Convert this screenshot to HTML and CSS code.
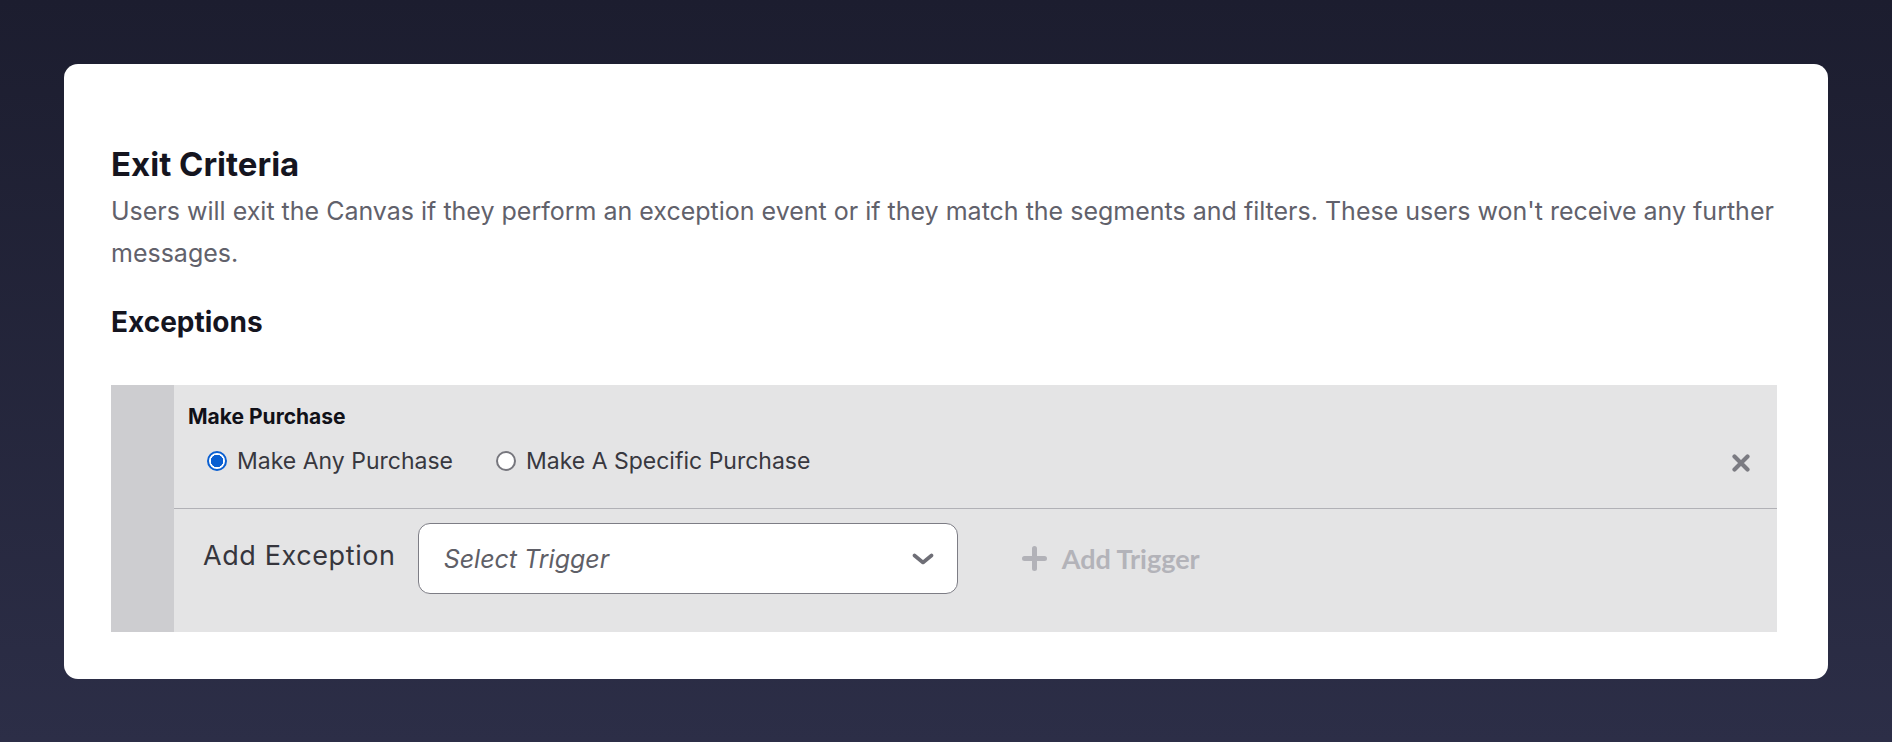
FILE: index.html
```html
<!DOCTYPE html>
<html lang="en">
<head>
  <meta charset="UTF-8" />
  <meta name="viewport" content="width=device-width, initial-scale=1.0" />
  <title>Exit Criteria</title>
  <link rel="stylesheet" href="styles.css">
</head>
<body>
  <div class="card">
    <h1>Exit Criteria</h1>
    <p class="desc">Users will exit the Canvas if they perform an exception event or if they match the segments and filters. These users won't receive any further messages.</p>
    <h2>Exceptions</h2>

    <div class="exceptions">
      <div class="stripe"></div>
      <div class="exceptions-body">
        <div class="event">
          <div class="event-name">Make Purchase</div>
          <div class="radios">
            <label class="radio"><span class="dot checked"></span>Make Any Purchase</label>
            <label class="radio"><span class="dot"></span>Make A Specific Purchase</label>
            <button type="button" class="remove" title="Remove">
              <svg width="18" height="18" viewBox="0 0 18 18"><path d="M2.5 2.5 L15.5 15.5 M15.5 2.5 L2.5 15.5" stroke="#7b7b82" stroke-width="4.2" stroke-linecap="round" fill="none"/></svg>
            </button>
          </div>
        </div>

        <div class="add-row">
          <span class="add-label">Add Exception</span>
          <div class="select">
            <span>Select Trigger</span>
            <svg width="22" height="12" viewBox="0 0 22 12"><path d="M2.5 2.5 L11 9.5 L19.5 2.5" stroke="#6e6e76" stroke-width="3.6" stroke-linecap="round" stroke-linejoin="round" fill="none"/></svg>
          </div>
          <button type="button" class="add-trigger">
            <svg width="25" height="25" viewBox="0 0 25 25"><path d="M12.5 2.5 V22.5 M2.5 12.5 H22.5" stroke="#b2b2b8" stroke-width="5" stroke-linecap="round" fill="none"/></svg>
            Add Trigger
          </button>
        </div>
      </div>
    </div>
  </div>
</body>
</html>
```

FILE: styles.css
```css
html, body {
  height: 100%;
}
body {
  margin: 0;
  padding: 64px;
  box-sizing: border-box;
  font-family: Inter, "Noto Sans", sans-serif;
  background: linear-gradient(to bottom, #1c1d2f, #2c2e47);
}
.card {
  background: white;
  border-radius: 14px;
  padding: 80px 51px 47px 47px;
}
h1 {
  margin: 0;
  font-size: 33px;
  line-height: 40px;
  font-weight: 700;
  color: #15151f;
}
.desc {
  margin: 6px 0 0;
  font-size: 25px;
  line-height: 42px;
  color: #61616b;
}
h2 {
  margin: 31px 0 0;
  font-size: 28px;
  line-height: 34px;
  font-weight: 700;
  color: #15151f;
}
.exceptions {
  display: flex;
  margin-top: 46px;
  background: #e4e4e5;
}
.stripe {
  width: 63px;
  background: #cdcdd0;
}
.exceptions-body {
  flex: 1;
}
.event {
  padding: 20px 0 34px 14px;
  border-bottom: 1px solid #b1b1b6;
}
.event-name {
  font-size: 21px;
  line-height: 24px;
  font-weight: 700;
  color: #111118;
}
.radios {
  display: flex;
  align-items: center;
  gap: 43px;
  margin-top: 19px;
  padding: 0 27px 0 19px;
}
.radio {
  display: flex;
  align-items: center;
  gap: 10px;
  font-size: 23px;
  line-height: 26px;
  color: #38383f;
}
.dot {
  width: 20px;
  height: 20px;
  box-sizing: border-box;
  border-radius: 50%;
  border: 2px solid #77777e;
  background: white;
}
.dot.checked {
  border-color: #0a5fd1;
  background: radial-gradient(circle, #0a5fd1 0 6px, white 6.5px);
}
.remove {
  margin-left: auto;
  padding: 0;
  border: none;
  background: none;
  display: flex;
  margin-top: 4px;
}
.add-row {
  display: flex;
  align-items: center;
  padding: 14px 0 38px 29px;
}
.add-label {
  align-self: flex-start;
  margin-top: 17px;
  font-size: 27px;
  line-height: 32px;
  letter-spacing: 0.6px;
  color: #36363d;
}
.select {
  display: flex;
  align-items: center;
  justify-content: space-between;
  width: 540px;
  height: 71px;
  box-sizing: border-box;
  margin-left: 22px;
  padding: 0 23px 0 25px;
  background: white;
  border: 1px solid #7d7d85;
  border-radius: 12px;
  font-size: 25px;
  line-height: 30px;
  font-style: italic;
  color: #5f5f67;
}
.add-trigger {
  display: flex;
  align-items: center;
  gap: 15px;
  margin-left: 64px;
  padding: 0;
  border: none;
  background: none;
  font-family: Lato, sans-serif;
  font-weight: 700;
  font-size: 27px;
  line-height: 32px;
  color: #b3b3b9;
}
```
